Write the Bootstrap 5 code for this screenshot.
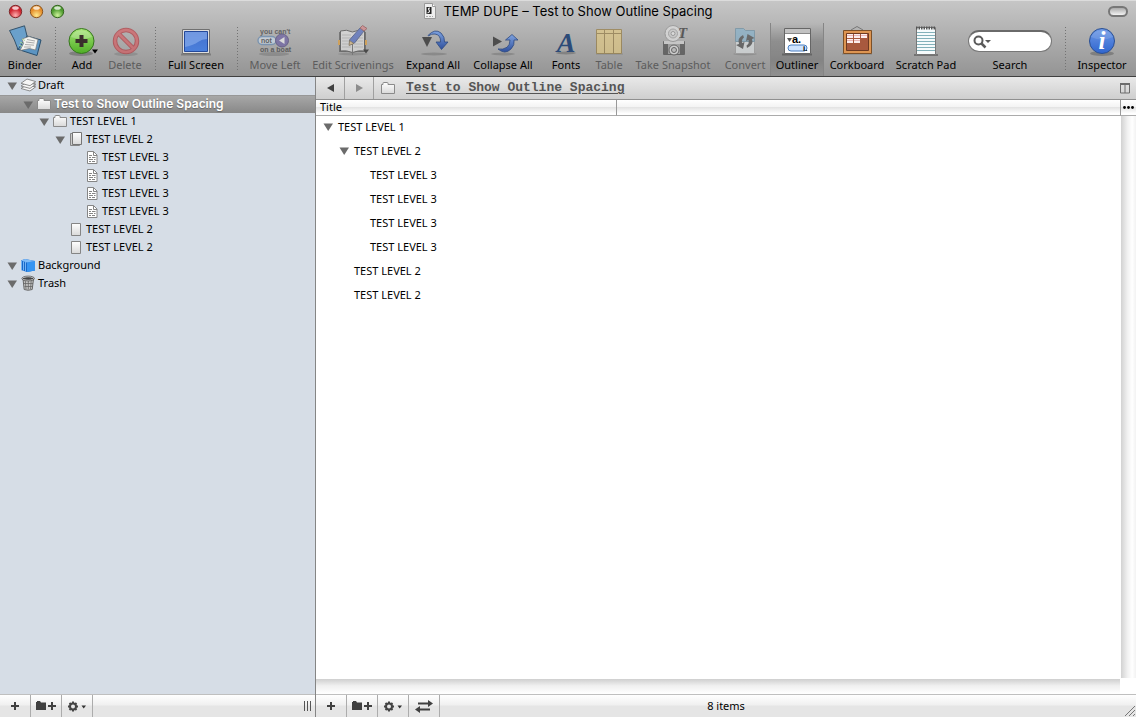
<!DOCTYPE html>
<html lang="en">
<head>
<meta charset="utf-8">
<meta name="viewport" content="width=device-width, initial-scale=1">
<title>TEMP DUPE – Test to Show Outline Spacing</title>
<link rel="stylesheet" href="https://cdn.jsdelivr.net/npm/bootstrap@5.3.0/dist/css/bootstrap.min.css">
<script src="https://cdn.jsdelivr.net/npm/bootstrap@5.3.0/dist/js/bootstrap.bundle.min.js"></script>
<style>
body { font-family: "Noto Sans", "Liberation Sans", sans-serif; font-size: 11px; line-height: 14px; color: #000; background: #fff; }
button { font: inherit; color: inherit; background: none; border: 0; padding: 0; }
svg { display: block; flex: none; overflow: visible; }

.chrome { background: linear-gradient(#c6c6c6, #949494); border-top: 1px solid #dcdcdc; border-bottom: 1px solid #404040; }
.titlebar { display: grid; grid-template-columns: 1fr auto 1fr; height: 22px; padding: 0 8px 2px; align-items: center; }
.titlebar h1 { font: 400 13px/20px Inter, "Liberation Sans", sans-serif; }
.lights { gap: 6px; }
.lights button { width: 15px; height: 15px; }
.pill { width: 20px; height: 11px; border: 2px solid #777; border-radius: 6px; background: linear-gradient(#aaa, #f4f4f4); }

.toolbar { height: 53px; padding-left: 2px; }
.tool { display: flex; flex-direction: column; align-items: center; gap: 1px; padding-top: 2px; white-space: nowrap; flex: none; }
.tool svg { width: 36px; height: 32px; }
.tool:disabled { color: #5c5c5c; }
.tool:disabled svg { opacity: .55; }
.w34 { width: 34px; } .w40 { width: 40px; } .w46 { width: 46px; } .w50 { width: 50px; } .w54 { width: 54px; } .w60 { width: 60px; }
.w66 { width: 66px; } .w74 { width: 74px; } .w94 { width: 94px; }
.rule { width: 14px; flex: none; background: repeating-linear-gradient(#737373 0 1px, transparent 1px 3px) center 4px / 1px 44px no-repeat; }
.tool.picked { border: solid #858585; border-width: 0 1px; background: linear-gradient(rgba(0,0,0,0), rgba(0,0,0,.17) 35%, rgba(0,0,0,.17) 70%, rgba(0,0,0,.03)); }
.finder { width: 84px; height: 22px; margin: 5px 0; border: 1px solid #777; border-top: 2px solid #6a6a6a; border-radius: 11px; background: #fff; padding-left: 4px; }
.finder input { border: 0; outline: 0; background: none; font-size: 11px; padding: 0; }
.finder svg { width: 18px; height: 14px; }

.sidebar { width: 316px; flex: none; background: #d6dde6; border-right: 1px solid #858585; }
.node { height: 18px; padding-left: calc(6px + 16px * var(--depth, 0)); padding-bottom: 2px; gap: 2px; }
.node svg { width: 16px; height: 16px; }
.d1 { --depth: 1; } .d2 { --depth: 2; } .d3 { --depth: 3; } .d4 { --depth: 4; }
.node.chosen { background: linear-gradient(#a7a7a7, #888); border-top: 1px solid #979797; color: #fff; font: 600 12px/14px Inter, "Liberation Sans", sans-serif; text-shadow: 0 1px 1px #666; }
.twist { width: 12px; flex: none; }
.twist svg, .node .twist svg { width: 12px; height: 10px; }
.node .twist svg { margin-top: 2px; }

.pathbar { height: 23px; border-bottom: 1px solid #909090; background: linear-gradient(#e9e9e9, #cfcfcf); }
.pathbar .step { width: 29px; border-right: 1px solid #a0a0a0; }
.crumb { gap: 10px; padding-left: 6px; }
.crumb a { font: 700 13px/18px "Liberation Mono", monospace; color: #555; text-underline-offset: 2px; }
.outline { border-collapse: separate; border-spacing: 0; }
.outline th { height: 16px; padding: 0 4px 1px; font-weight: 400; border-bottom: 1px solid #ababab; }
.outline th:first-child { width: 301px; border-right: 1px solid #999; }
.outline th, .more { background: linear-gradient(#fff, #f4f4f4 45%, #e4e4e4 50%, #fff 90%); }
.outline td { height: 24px; padding: 0 0 2px calc(6px + 16px * var(--depth, 0)); }
.edge { width: 16px; flex: none; }
.more { height: 16px; border-left: 1px solid #999; border-bottom: 1px solid #ababab; }
.vscroll { margin-left: 1px; background: linear-gradient(90deg, #d2d2d2, #f2f2f2 45%, #fff 75%, #f2f2f2); }
.hscroll { height: 15px; background: linear-gradient(#cfcfcf, #f0f0f0 45%, #fff); }

.footbar { height: 23px; border-top: 1px solid #bfbfbf; background: linear-gradient(#fff, #f0f0f0 10px, #e5e5e5 11px); }
.footbar .act { width: 31px; border-right: 1px solid #acacac; }
.status { display: grid; grid-template-columns: 1fr auto 1fr; }
</style>
</head>
<body class="vh-100 d-flex flex-column overflow-hidden">

<svg width="0" height="0" class="position-absolute" aria-hidden="true">
  <defs>
    <linearGradient id="gFold" x2="0" y2="1"><stop stop-color="#fff"/><stop offset="1" stop-color="#d9d9d9"/></linearGradient>
    <linearGradient id="gGreen" x2="0" y2="1"><stop stop-color="#a5e575"/><stop offset="1" stop-color="#4fae25"/></linearGradient>
    <linearGradient id="gBlue" x2="0" y2="1"><stop stop-color="#6f9ae6"/><stop offset="1" stop-color="#2f65cf"/></linearGradient>
    <linearGradient id="gScreen" x2="0" y2="1"><stop stop-color="#4470cc"/><stop offset="1" stop-color="#4b80dc"/></linearGradient>
    <linearGradient id="gArrow" x2="0" y2="1"><stop stop-color="#7fa3e0"/><stop offset="1" stop-color="#2e4f9c"/></linearGradient>
    <radialGradient id="gRed" cy=".8"><stop stop-color="#ffb0b0"/><stop offset="1" stop-color="#cf2630"/></radialGradient>
    <radialGradient id="gAmber" cy=".8"><stop stop-color="#ffe98c"/><stop offset="1" stop-color="#e58f2c"/></radialGradient>
    <radialGradient id="gLime" cy=".8"><stop stop-color="#cdf29a"/><stop offset="1" stop-color="#4f9c30"/></radialGradient>
    <symbol id="tri" viewBox="0 0 12 10"><path d="M1.500 1.500h9.500L6.200 9z" fill="#6b6b6b"/></symbol>
    <symbol id="folder" viewBox="0 0 16 16"><path d="M2 13.500h12.500V4.500H8V3.200Q8 2.500 7.300 2.500H3.500Q3 2.500 3 3.200V4.500H1.500v9z" fill="url(#gFold)" stroke="#8a8a8a"/></symbol>
    <symbol id="page" viewBox="0 0 16 16"><path d="M3.500 2.500h9v12h-9z" fill="url(#gFold)" stroke="#858585"/></symbol>
    <symbol id="pages" viewBox="0 0 16 16"><path d="M2.500 2.500h9v12h-9z" fill="#ccc" stroke="#858585"/><path d="M4.500 1.500h9v12h-9z" fill="url(#gFold)" stroke="#757575"/></symbol>
    <symbol id="text" viewBox="0 0 16 16"><path d="M3.500 2.500h6l3.500 3.500v8.500H3.500z" fill="#fff" stroke="#858585"/><path d="M9.500 2.500v4H13" fill="none" stroke="#858585"/><path d="M5 6.500h3M5 8.500h2m1 0h3.500M5 10.500h4m1 0h1.500M5 12.500h2m1 0h3" stroke="#858585"/></symbol>
    <symbol id="disclose" viewBox="0 0 6 4"><path d="M0 0h6L3 4z"/></symbol>
    <symbol id="plus" viewBox="0 0 8 8"><path d="M3 0h2v3h3v2H5v3H3V5H0V3h3z" fill="#404040"/></symbol>
    <symbol id="folderplus" viewBox="0 0 20 11"><path d="M0 2V1h1V0h3l1 1.500h5V9H0z" fill="#404040"/><path d="M15 1h2v3h3v2h-3v3h-2V6h-3V4h3z" fill="#404040"/></symbol>
    <symbol id="gear" viewBox="0 0 18 11"><circle cx="5" cy="5.500" r="3" fill="none" stroke="#444" stroke-width="2"/><g stroke="#444" stroke-width="2"><path d="M5 .5v2M5 8.500v2M0 5.500h2M8 5.500h2M1.500 2l1.400 1.400M7.100 7.600l1.400 1.400M8.500 2L7.100 3.400M1.500 9l1.400-1.400"/></g><path d="M13.500 4.500h4.500L15.700 7.500z" fill="#333"/></symbol>
  </defs>
</svg>

<header class="chrome flex-shrink-0">
  <div class="titlebar">
    <div class="lights d-flex">
      <button type="button" aria-label="Close"><svg width="15" height="15"><circle cx="7.500" cy="7.500" r="6.200" fill="url(#gRed)" stroke="#7d2a2c"/><ellipse cx="7.500" cy="4" rx="3.300" ry="1.800" fill="#fff" opacity=".75"/></svg></button>
      <button type="button" aria-label="Minimize"><svg width="15" height="15"><circle cx="7.500" cy="7.500" r="6.200" fill="url(#gAmber)" stroke="#8a5520"/><ellipse cx="7.500" cy="4" rx="3.300" ry="1.800" fill="#fff" opacity=".75"/></svg></button>
      <button type="button" aria-label="Zoom"><svg width="15" height="15"><circle cx="7.500" cy="7.500" r="6.200" fill="url(#gLime)" stroke="#35651f"/><ellipse cx="7.500" cy="4" rx="3.300" ry="1.800" fill="#fff" opacity=".75"/></svg></button>
    </div>
    <div class="d-flex align-items-center gap-1">
      <svg width="16" height="16"><path d="M1.500 .5h8l3 3v12h-11z" fill="#eee" stroke="#999"/><path d="M9.500 .5v3h3" fill="#fff" stroke="#999"/><path d="M3.500 4h5v7h-5z" fill="#222"/><path d="M7 5q-2.500 0-1 2t-1.500 3" stroke="#eee" fill="none" stroke-width="1.200"/><path d="M3 13.500h7" stroke="#aaa" stroke-dasharray="2 1"/></svg>
      <h1 class="m-0">TEMP DUPE – Test to Show Outline Spacing</h1>
    </div>
    <button type="button" class="pill ms-auto" aria-label="Toggle toolbar"></button>
  </div>

  <div class="toolbar d-flex">
    <button type="button" class="tool w46"><svg viewBox="0 0 36 32"><path d="M10 24l20 6.500L34 15l-14-4z" fill="#5b94c2" stroke="#294f6d"/><path d="M2.500 5.500L17.500 .8 20 11 11 24.500Q8 15 2.500 5.500z" fill="#6aa0cb" stroke="#35536b"/><path d="M15 14l7-2.500 9 3-2.500 10.500-6-1.500-9.500 2 3.500-7z" fill="#f3f3ef" stroke="#777" stroke-width=".7"/><path d="M20 14.500l8 1.500M19 17l8.500 1M18 19.500l9 .7M17 22h7" stroke="#aaa" fill="none"/><path d="M13 17l3 1.500M12 20l3 1.500M15 14l3 1.500" stroke="#a6d39a"/></svg>Binder</button>
    <span class="rule"></span>
    <button type="button" class="tool w40"><svg viewBox="0 0 36 32"><ellipse cx="17" cy="28.500" rx="12" ry="2.500" opacity=".22"/><circle cx="17.500" cy="16" r="12.500" fill="url(#gGreen)" stroke="#37761f"/><path d="M7 12Q10 5.500 17.500 5.200 25 5.500 28 12 18 16 7 12z" fill="#fff" opacity=".22"/><path d="M15.500 10h4v4h4v4h-4v4h-4v-4h-4v-4h4z" fill="#3a2f2c"/><use href="#disclose" x="28" y="24" width="6" height="5"/></svg>Add</button>
    <button type="button" class="tool w46" disabled><svg viewBox="0 0 36 32"><ellipse cx="19" cy="29" rx="12" ry="2" opacity=".2"/><circle cx="19" cy="16" r="11" fill="none" stroke="#b01d24" stroke-width="4.500"/><path d="M11.500 8.500l15 15" stroke="#b01d24" stroke-width="4.500"/><circle cx="19" cy="16" r="11" fill="none" stroke="#e0494f" stroke-width="2.500"/><path d="M11.500 8.500l15 15" stroke="#e0494f" stroke-width="2.500"/></svg>Delete</button>
    <span class="rule"></span>
    <button type="button" class="tool" style="width:68px"><svg viewBox="0 0 36 32"><path d="M3 29.500h30" stroke="#666" stroke-width="2" opacity=".6"/><path d="M4.500 4.500h27v24h-27z" fill="#dedede" stroke="#707070"/><path d="M6.500 6.500h23v20h-23z" fill="url(#gScreen)" stroke="#24499a"/><path d="M7 7h22v7q-5 0-9 3T7 22z" fill="#8fb2ee" opacity=".6"/></svg>Full Screen</button>
    <span class="rule"></span>
    <button type="button" class="tool" style="width:62px" disabled><svg viewBox="0 0 36 32"><ellipse cx="17" cy="29" rx="15" ry="2" opacity=".25"/><g font-family="Liberation Sans, sans-serif" font-weight="700" font-size="7" fill="#222"><text x="3" y="9">you can't</text><text x="3" y="27">on a boat</text></g><rect x="1" y="11.500" width="18" height="8" rx="4" fill="#d5e5f5" stroke="#5381b3" stroke-width="1.400"/><text x="4" y="18" font-family="Liberation Sans, sans-serif" font-weight="700" font-size="7" fill="#222">not</text><circle cx="25" cy="15.500" r="6.500" fill="#5a4aa0" stroke="#33286b"/><path d="M27.500 12v7L22 15.500z" fill="#fff"/></svg>Move Left</button>
    <button type="button" class="tool w94" disabled><svg viewBox="0 0 36 32"><ellipse cx="18" cy="29" rx="15" ry="1.500" opacity=".2"/><path d="M4 7h27v20H4z" fill="#4a4a4a"/><path d="M3 15h3v5H3zM29 15h3v5h-3z" fill="#ee9a1c"/><path d="M5.500 6q6-2 12 1 6-3 12-1v20q-6-1-12 1.500-6-2.500-12-1.500z" fill="#eee" stroke="#333"/><path d="M7 10h9M7 13h9M7 16h9M7 19h9M7 22h9M19 10h9M19 13h9M19 16h9M19 19h9M19 22h9" stroke="#bbb"/><path d="M17.500 17v13" stroke="#555"/><path d="M14.500 15L25 3l4 3-9.500 12-5 2z" fill="#3d5ec9" stroke="#263b79"/><path d="M25 3l2.500-2.500 4.500 3L29 6z" fill="#e07a80" stroke="#8c3a3a"/><path d="M14.500 15.500L19 18.500l-5 2z" fill="#e8c17a" stroke="#5b4520" stroke-width=".7"/><use href="#disclose" x="28" y="24" width="6" height="5"/></svg>Edit Scrivenings</button>
    <button type="button" class="tool w66"><svg viewBox="0 0 36 32"><ellipse cx="19" cy="29" rx="13" ry="1.500" opacity=".15"/><path d="M7 12h10l-5 10z" fill="#4d4d4d"/><path d="M13 10.500Q20 3 26 8q4 4 3.500 9h3.500l-6.500 7.500L21 17h4.500Q26 10 20 9q-4-.5-6.500 2z" fill="url(#gArrow)" stroke="#2e4a80" stroke-width=".8"/></svg>Expand All</button>
    <button type="button" class="tool w74"><svg viewBox="0 0 36 32"><ellipse cx="18" cy="29" rx="12" ry="1.500" opacity=".15"/><path d="M8 11.500v10l9-5z" fill="#4d4d4d"/><path d="M13 24q7 6 13 0 4-4 3-9h4L27 9.500 20.500 15h4.500q0 5-3 7.300-4 2.700-9 1.700z" fill="url(#gArrow)" stroke="#2e4a80" stroke-width=".8"/></svg>Collapse All</button>
    <button type="button" class="tool" style="width:52px"><svg viewBox="0 0 36 32"><ellipse cx="18" cy="28" rx="10" ry="1.500" opacity=".2"/><text x="18" y="27" text-anchor="middle" font-family="Liberation Serif, serif" font-style="italic" font-weight="700" font-size="28" fill="#2c4b78">A</text></svg>Fonts</button>
    <button type="button" class="tool w34" disabled><svg viewBox="0 0 36 32"><path d="M5 29h27" stroke="#555" opacity=".5"/><path d="M5.500 4.500h25v24h-25z" fill="#efd078" stroke="#8f6f26"/><path d="M6 8.500h24M13.500 5v23M22.500 5v23" stroke="#8f6f26"/></svg>Table</button>
    <button type="button" class="tool w94" disabled><svg viewBox="0 0 36 32"><path d="M8.500 16.500h21v13h-21z" fill="#999" stroke="#333"/><path d="M9 19h4v10H9zM25 19h4v10h-4z" fill="#333"/><path d="M9 16h20v3H9z" fill="#ddd"/><circle cx="19" cy="25" r="5" fill="#eee" stroke="#333"/><circle cx="19" cy="25" r="2.500" fill="#ccc" stroke="#333"/><circle cx="18" cy="8.500" r="8" fill="#eee" stroke="#888"/><circle cx="18" cy="8.500" r="4.500" fill="#ddd" stroke="#999"/><circle cx="18" cy="8.500" r="2" fill="#fff" stroke="#888"/><text x="23" y="13" font-family="Liberation Serif, serif" font-style="italic" font-weight="700" font-size="15" fill="#111">T</text></svg>Take Snapshot</button>
    <button type="button" class="tool w50" disabled><svg viewBox="0 0 36 32"><ellipse cx="18" cy="29" rx="12" ry="1.500" opacity=".2"/><path d="M8.500 3.500h8l2 2h9v23h-19z" fill="#e8eef0" stroke="#999"/><path d="M8.500 3.500h8l2 2h9v11h-19z" fill="#7db3d3" stroke="#5b87a0"/><path d="M16 10q-6 3-4 9l-3 1 7 4 1.500-7-2.500 1q-.5-4 2-5.500zM20 23q7-3 5-9l2.500-1-7-4-1.500 7 2.500-1q1 4-2 5.500z" fill="#333"/></svg>Convert</button>
    <button type="button" class="tool w54 picked" aria-pressed="true"><svg viewBox="0 0 36 32"><path d="M3 29.500h30" stroke="#444" stroke-width="2" opacity=".5"/><path d="M5.500 3.500h26v25h-26z" fill="#fff" stroke="#666"/><path d="M6 4h25v4H6z" fill="#c2c2c2"/><path d="M6 8.500h25" stroke="#888"/><path d="M8 13h5l-2.500 4z" fill="#555"/><rect x="9" y="20" width="19" height="6" rx="3" fill="#cfe4ff" stroke="#4a7fc0"/><text x="13" y="18" font-family="Liberation Sans, sans-serif" font-size="11" font-weight="700">a.</text><text x="24" y="26" font-family="Liberation Sans, sans-serif" font-size="8" font-weight="700">i.</text></svg>Outliner</button>
    <button type="button" class="tool w66"><svg viewBox="0 0 36 32"><path d="M12 5l6-3.500L24 5" stroke="#777" fill="none"/><path d="M3 29h30" stroke="#555" opacity=".4"/><path d="M4.500 5.500h28v23h-28z" fill="#dd9552" stroke="#7c5028"/><path d="M7.500 8.500h22v17h-22z" fill="#a8593e" stroke="#6e3a22"/><path d="M8 9h6v4H8zM15 9h6v4h-6zM22 9h6v4h-6zM8 14h6v4H8zM15 14h6v4h-6z" fill="#fbeeee"/><path d="M8 10.500h20M8 15.500h13" stroke="#e9b5b5" stroke-dasharray="6 1"/></svg>Corkboard</button>
    <button type="button" class="tool" style="width:72px"><svg viewBox="0 0 36 32"><path d="M6 30h24" stroke="#444" stroke-width="2" opacity=".5"/><path d="M8.500 2.500h19v27h-19z" fill="#f6fbfc" stroke="#777"/><path d="M9 7.500h18M9 10.500h18M9 13.500h18M9 16.500h18M9 19.500h18M9 22.500h18M9 25.500h18" stroke="#83b1ba"/><path d="M8 3h20" stroke="#555" stroke-width="3" stroke-dasharray="1.500 1"/></svg>Scratch Pad</button>
    <div class="tool" style="width:96px">
      <div class="finder d-flex align-items-center"><svg viewBox="0 0 18 14"><circle cx="5.500" cy="5.500" r="4" fill="none" stroke="#5a5a5a" stroke-width="2"/><path d="M8.500 8.500l4 4" stroke="#5a5a5a" stroke-width="2.500"/><path d="M12 5h6l-3 3z" fill="#5a5a5a"/></svg><input id="find" type="search" class="w-100"></div>
      <label for="find">Search</label>
    </div>
    <span class="rule"></span>
    <button type="button" class="tool w60"><svg viewBox="0 0 36 32"><ellipse cx="18" cy="28.500" rx="12" ry="2.500" opacity=".22"/><circle cx="18" cy="16" r="12.500" fill="url(#gBlue)" stroke="#2b5093"/><path d="M7 12Q10 5.500 18 5.200 26 5.500 29 12 18 17 7 12z" fill="#fff" opacity=".12"/><text x="18" y="24" text-anchor="middle" font-family="Liberation Serif, serif" font-style="italic" font-weight="700" font-size="25" fill="#fff">i</text></svg>Inspector</button>
  </div>
</header>

<div class="d-flex flex-fill overflow-hidden">
  <aside class="sidebar d-flex flex-column">
    <ul class="list-unstyled m-0 flex-fill overflow-hidden" aria-label="Binder">
      <li class="node d-flex align-items-center"><button type="button" class="twist" aria-label="Collapse"><svg><use href="#tri"/></svg></button><svg viewBox="0 0 16 16"><path d="M10 14l5.500-4V4.500L10 8.500z" fill="#999"/><g fill="#f6f6f6" stroke="#757575" stroke-width=".8"><path d="M1 11.500l9 2.500 5.500-4-9-2z"/><path d="M1 9l9 2.400 5.500-4-9-2z"/><path d="M1 6.300l9 2.400 5.500-4.200L7 2z"/></g></svg>Draft</li>
      <li class="node d1 chosen d-flex align-items-center"><button type="button" class="twist" aria-label="Collapse"><svg><use href="#tri"/></svg></button><svg><use href="#folder"/></svg>Test to Show Outline Spacing</li>
      <li class="node d2 d-flex align-items-center"><button type="button" class="twist" aria-label="Collapse"><svg><use href="#tri"/></svg></button><svg><use href="#folder"/></svg>TEST LEVEL 1</li>
      <li class="node d3 d-flex align-items-center"><button type="button" class="twist" aria-label="Collapse"><svg><use href="#tri"/></svg></button><svg><use href="#pages"/></svg>TEST LEVEL 2</li>
      <li class="node d4 d-flex align-items-center"><span class="twist"></span><svg><use href="#text"/></svg>TEST LEVEL 3</li>
      <li class="node d4 d-flex align-items-center"><span class="twist"></span><svg><use href="#text"/></svg>TEST LEVEL 3</li>
      <li class="node d4 d-flex align-items-center"><span class="twist"></span><svg><use href="#text"/></svg>TEST LEVEL 3</li>
      <li class="node d4 d-flex align-items-center"><span class="twist"></span><svg><use href="#text"/></svg>TEST LEVEL 3</li>
      <li class="node d3 d-flex align-items-center"><span class="twist"></span><svg><use href="#page"/></svg>TEST LEVEL 2</li>
      <li class="node d3 d-flex align-items-center"><span class="twist"></span><svg><use href="#page"/></svg>TEST LEVEL 2</li>
      <li class="node d-flex align-items-center"><button type="button" class="twist" aria-label="Collapse"><svg><use href="#tri"/></svg></button><svg viewBox="0 0 16 16"><path d="M1 3.500l4-1.500 10 2v9.500L7 15l-6-2z" fill="#1767c9"/><path d="M7 5.500l8-1.500v9.500L7 15z" fill="#3594f2"/><path d="M1.500 4v9M3.500 4.500v9M5.500 5v9.500" stroke="#8cc8ff" stroke-width=".8"/><path d="M1 3.500l4-1.500 10 2-8 1.500z" fill="#7fbcf8"/></svg>Background</li>
      <li class="node d-flex align-items-center"><button type="button" class="twist" aria-label="Collapse"><svg><use href="#tri"/></svg></button><svg viewBox="0 0 16 16"><path d="M3 4l1.200 10.500q4 1.500 8 0L13.500 4z" fill="#c4c4c4" stroke="#666"/><path d="M5.300 6l.7 8M8.300 6v8.500M11.200 6l-.7 8M4 8.500h9M4.500 11.500h8" stroke="#666" stroke-width=".8"/><ellipse cx="8.200" cy="3.500" rx="5.700" ry="1.800" fill="#444" stroke="#ddd"/><ellipse cx="8.200" cy="3.500" rx="6.300" ry="2.400" fill="none" stroke="#444" stroke-width=".7"/></svg>Trash</li>
    </ul>
    <div class="footbar d-flex">
      <button type="button" class="act d-flex align-items-center justify-content-center" aria-label="Add item"><svg width="8" height="8"><use href="#plus"/></svg></button>
      <button type="button" class="act d-flex align-items-center justify-content-center" aria-label="Add folder"><svg width="20" height="11"><use href="#folderplus"/></svg></button>
      <button type="button" class="act d-flex align-items-center justify-content-center" aria-label="Actions"><svg width="18" height="11"><use href="#gear"/></svg></button>
      <svg class="ms-auto me-1 my-auto" width="7" height="10"><path d="M.5 0v10M3.500 0v10M6.500 0v10" stroke="#555"/></svg>
    </div>
  </aside>

  <main class="d-flex flex-column flex-fill">
    <nav class="pathbar d-flex align-items-stretch">
      <button type="button" class="step d-flex align-items-center justify-content-center" aria-label="Back"><svg width="7" height="8"><path d="M7 0v8L0 4z" fill="#404040"/></svg></button>
      <button type="button" class="step d-flex align-items-center justify-content-center" aria-label="Forward"><svg width="7" height="8"><path d="M0 0v8l7-4z" fill="#8c8c8c"/></svg></button>
      <div class="crumb d-flex align-items-center"><svg width="16" height="16"><use href="#folder"/></svg><a href="#">Test to Show Outline Spacing</a></div>
      <button type="button" class="ms-auto px-1 d-flex align-items-center" aria-label="Split view"><svg width="13" height="12"><path d="M1.500 2v9h9V2M6 2v9" fill="none" stroke="#6d6d6d"/><path d="M1 2h10" stroke="#6d6d6d" stroke-width="2"/></svg></button>
    </nav>
    <div class="d-flex flex-fill">
      <div class="d-flex flex-column flex-fill">
        <table class="outline w-100">
          <thead><tr><th scope="col">Title</th><th></th></tr></thead>
          <tbody>
            <tr><td colspan="2"><div class="d-flex align-items-center gap-1"><button type="button" class="twist" aria-label="Collapse"><svg><use href="#tri"/></svg></button>TEST LEVEL 1</div></td></tr>
            <tr><td colspan="2" class="d1"><div class="d-flex align-items-center gap-1"><button type="button" class="twist" aria-label="Collapse"><svg><use href="#tri"/></svg></button>TEST LEVEL 2</div></td></tr>
            <tr><td colspan="2" class="d2"><div class="d-flex gap-1"><span class="twist"></span>TEST LEVEL 3</div></td></tr>
            <tr><td colspan="2" class="d2"><div class="d-flex gap-1"><span class="twist"></span>TEST LEVEL 3</div></td></tr>
            <tr><td colspan="2" class="d2"><div class="d-flex gap-1"><span class="twist"></span>TEST LEVEL 3</div></td></tr>
            <tr><td colspan="2" class="d2"><div class="d-flex gap-1"><span class="twist"></span>TEST LEVEL 3</div></td></tr>
            <tr><td colspan="2" class="d1"><div class="d-flex gap-1"><span class="twist"></span>TEST LEVEL 2</div></td></tr>
            <tr><td colspan="2" class="d1"><div class="d-flex gap-1"><span class="twist"></span>TEST LEVEL 2</div></td></tr>
          </tbody>
        </table>
        <div class="hscroll mt-auto"></div>
      </div>
      <div class="edge d-flex flex-column">
        <button type="button" class="more d-flex align-items-center justify-content-center" aria-label="Columns"><svg width="11" height="3"><circle cx="1.500" cy="1.500" r="1.400"/><circle cx="5.500" cy="1.500" r="1.400"/><circle cx="9.500" cy="1.500" r="1.400"/></svg></button>
        <div class="vscroll flex-fill"></div>
        <div class="pt-3"></div>
      </div>
    </div>
    <footer class="footbar status">
      <div class="d-flex">
        <button type="button" class="act d-flex align-items-center justify-content-center" aria-label="Add item"><svg width="8" height="8"><use href="#plus"/></svg></button>
        <button type="button" class="act d-flex align-items-center justify-content-center" aria-label="Add folder"><svg width="20" height="11"><use href="#folderplus"/></svg></button>
        <button type="button" class="act d-flex align-items-center justify-content-center" aria-label="Actions"><svg width="18" height="11"><use href="#gear"/></svg></button>
        <button type="button" class="act d-flex align-items-center justify-content-center" aria-label="Swap"><svg width="18" height="13"><path d="M3 2.500h10V0l5 3.500L13 7V4.500H3zM15 8.500H5V6L0 9.500 5 13v-2.500h10z" fill="#404040"/></svg></button>
      </div>
      <span class="align-self-center">8 items</span>
      <svg class="ms-auto mt-auto" width="12" height="12"><path d="M1 11L11 1M5 11l6-6M9 11l2-2" stroke="#777"/></svg>
    </footer>
  </main>
</div>
</body>
</html>
